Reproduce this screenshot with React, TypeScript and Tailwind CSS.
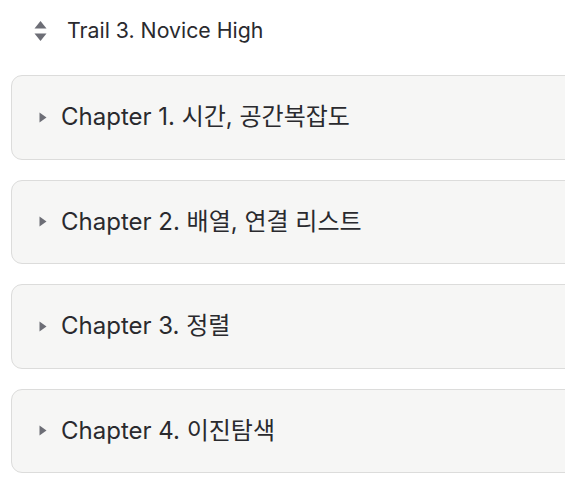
import React from "react";

const chapters = [
  "Chapter 1. 시간, 공간복잡도",
  "Chapter 2. 배열, 연결 리스트",
  "Chapter 3. 정렬",
  "Chapter 4. 이진탐색",
  "",
];

export default function App() {
  return (
    <div
      className="w-[565px] h-[493px] overflow-hidden bg-white text-[#2a2a2e]"
      style={{ fontFamily: "Inter, 'Noto Sans CJK KR', sans-serif" }}
    >
      <div className="flex items-center h-[61px] pl-[34px] pt-[1px]">
        <svg width="13" height="22" viewBox="0 0 13 22" className="shrink-0">
          <path d="M6.5 1 L12.5 8.5 L0.5 8.5 Z" fill="#6d6e76" strokeLinejoin="round" />
          <path d="M6.5 21 L12.5 13.5 L0.5 13.5 Z" fill="#6d6e76" strokeLinejoin="round" />
        </svg>
        <span className="ml-[20px] text-[21.3px] leading-none">Trail 3. Novice High</span>
      </div>
      <div className="flex flex-col gap-[20px] pl-[11px] pt-[14px]">
        {chapters.map((c, i) => (
          <div
            key={i}
            className="w-[570px] h-[84.5px] shrink-0 rounded-[11px] border border-[#dcdcdb] bg-[#f6f6f5] flex items-center pl-[27px]"
          >
            {c && (
              <>
                <svg width="8" height="11" viewBox="0 0 8 11" className="shrink-0">
                  <path d="M0.5 0.5 L7.5 5.5 L0.5 10.5 Z" fill="#6d6e76" />
                </svg>
                <span className="ml-[14px] text-[24px] leading-none">{c}</span>
              </>
            )}
          </div>
        ))}
      </div>
    </div>
  );
}
